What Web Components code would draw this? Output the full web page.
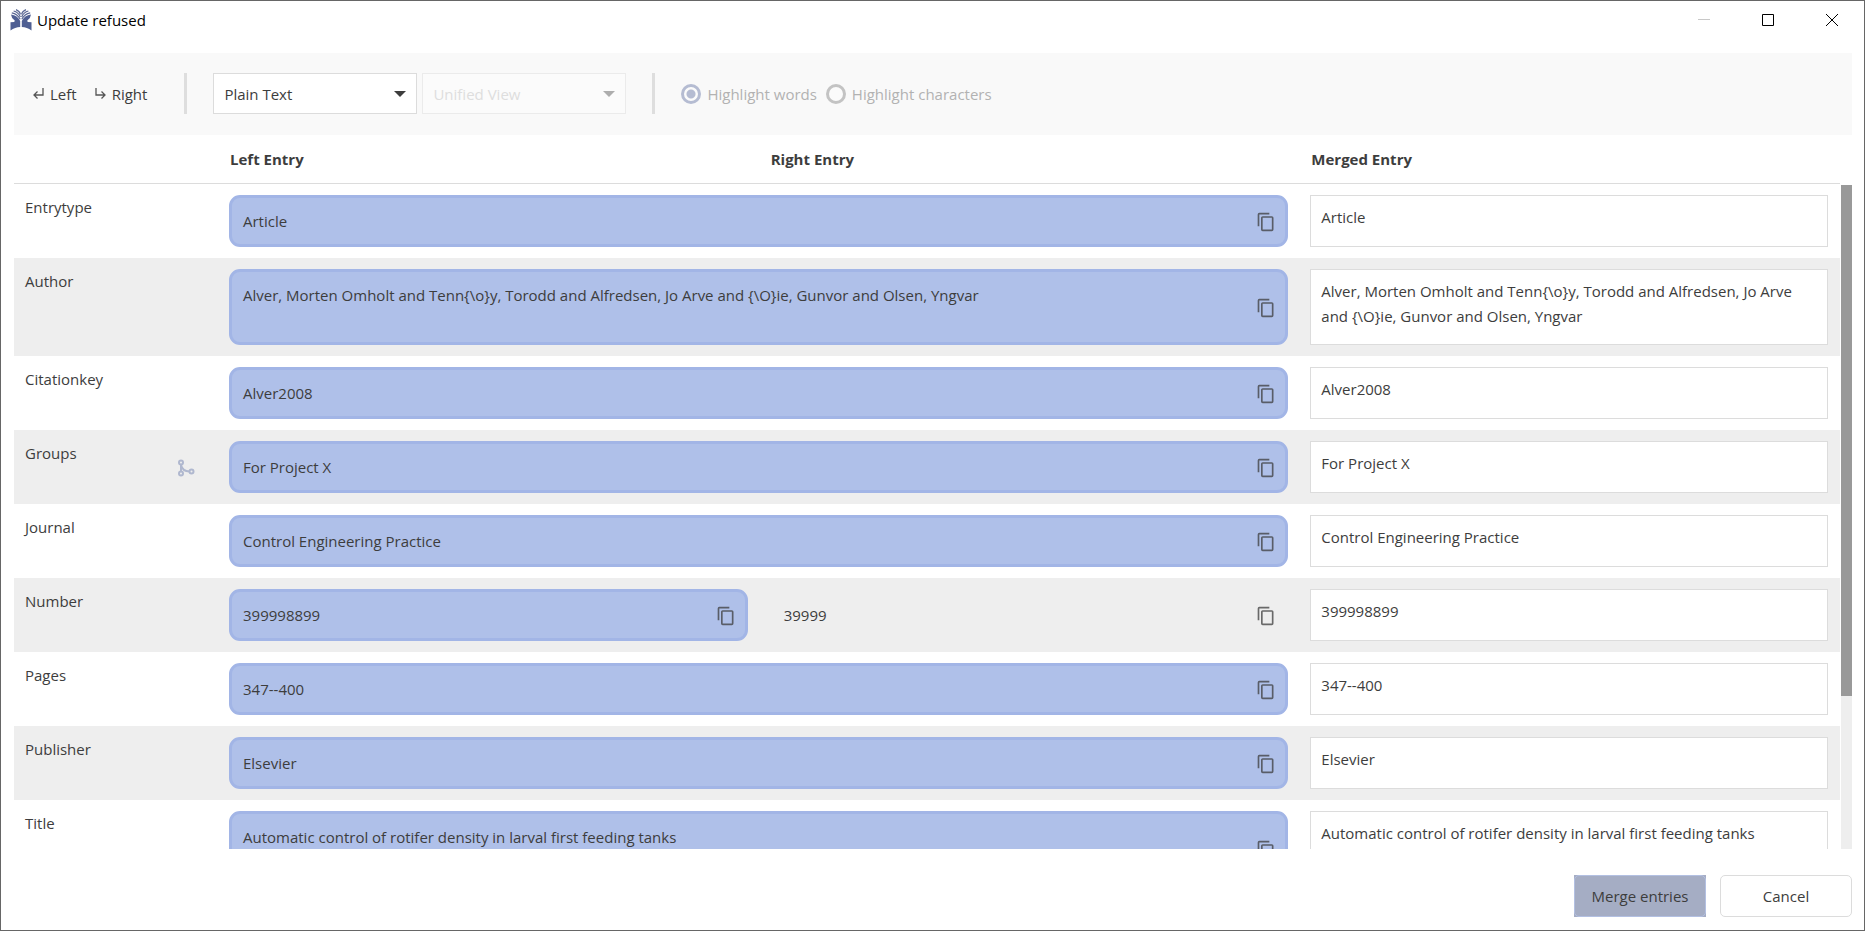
<!DOCTYPE html>
<html lang="en">
<head>
<meta charset="utf-8">
<title>Update refused</title>
<style>
  html, body { height: 100%; margin: 0; }
  body { font: 15px/24px "Open Sans", "Noto Sans", sans-serif; color: #3d3d3d; background: #fff; }
</style>
</head>
<body>
<merge-dialog></merge-dialog>

<script>
const define = (name, html, setup) => {
  const template = document.createElement('template');
  template.innerHTML = html;
  customElements.define(name, class extends HTMLElement {
    connectedCallback() {
      if (this.shadowRoot) return;
      this.attachShadow({ mode: 'open' }).append(template.content.cloneNode(true));
      if (setup) setup(this, this.shadowRoot);
    }
  });
};

define('title-bar', `
  <style>
    :host { display: flex; align-items: center; gap: 5px; height: 38px; padding: 0 20px 0 9px; color: #000; }
    h1 { flex: 1; margin: 0; font-size: 15px; font-weight: 400; line-height: 24px; }
    nav { display: flex; gap: 40px; }
    button { width: 24px; height: 24px; padding: 0; border: 0; background: none; color: inherit; }
    svg { display: block; }
    button:disabled { color: #c8c8c8; }
  </style>
  <svg width="22" height="22" viewBox="0 0 22 22" fill="none" aria-hidden="true">
    <g id="half">
      <path fill="#4f5f93" d="M1 5.600Q7.500 6.500 10.200 12V18Q5 18 0.500 21.600V13.200L4 13Q5.800 12.200 4.200 11Q1.500 9.500 1 5.600Z"/>
      <path stroke="#5a6794" stroke-width="1.200" d="M1.800 3.800Q7.500 4.800 10.200 10.200M3.600 2Q8.300 3.200 10.400 8M6 0.600Q9.500 2 10.500 5.400"/>
    </g>
    <use href="#half" transform="matrix(-1 0 0 1 22 0)"/>
  </svg>
  <h1><slot></slot></h1>
  <nav aria-label="Window">
    <button disabled aria-label="Minimize"><svg width="24" height="24"><path d="M6 11.500H18" stroke="currentColor"/></svg></button>
    <button aria-label="Maximize"><svg width="24" height="24"><path d="M6.500 6.500H17.500V17.500H6.500Z" fill="none" stroke="currentColor"/></svg></button>
    <button aria-label="Close"><svg width="24" height="24"><path d="M6 6L18 18M18 6L6 18" stroke="currentColor"/></svg></button>
  </nav>
`);

define('drop-down', `
  <style>
    :host { display: grid; width: 204px; height: 41px; align-items: center; }
    select, svg { grid-area: 1 / 1; }
    select { width: 100%; height: 100%; padding: 0 10px; border: 1px solid #dcdcdc; border-radius: 0;
      appearance: none; background: #fff; color: inherit; font: inherit; opacity: 1; }
    svg { justify-self: end; margin-right: 11px; pointer-events: none; }
    select:disabled { border-color: #ebebeb; background: #fbfbfb; color: #dedede; }
    select:disabled + svg { color: #adadad; }
  </style>
  <select><option></option></select>
  <svg width="12" height="6" viewBox="0 0 12 6" aria-hidden="true"><path fill="currentColor" d="M0 0H12L6 6Z"/></svg>
`, (host, root) => {
  const select = root.querySelector('select');
  select.options[0].textContent = host.getAttribute('value');
  select.setAttribute('aria-label', host.getAttribute('label'));
  select.disabled = host.hasAttribute('disabled');
});

define('tool-bar', `
  <style>
    :host { display: flex; align-items: center; padding: 20px 19px 21px; background: #f9f9f9; }
    button { display: flex; align-items: center; gap: 6px; padding: 0; border: 0; background: none; color: inherit; font: inherit; }
    button + button { margin-left: 18px; }
    hr { align-self: stretch; width: 3px; margin: 0 26px; border: 0; background: #dedede; }
    hr.first { margin-left: 37px; }
    drop-down + drop-down { margin-left: 5px; }
    fieldset { display: flex; gap: 9px; margin: 0; padding: 0; border: 0; }
    label { display: flex; align-items: center; gap: 6px; color: #b2b2b2; }
    input { appearance: none; width: 20px; height: 20px; margin: 0; border: 3px solid #c3c3c3; border-radius: 50%; background: #fbfbfb; }
    input:checked { border-color: #b5bcd2; background: radial-gradient(circle, #b5bcd2 4px, #fbfbfb 5px); }
  </style>
  <button><svg width="11" height="11" viewBox="0 0 11 11" fill="none" stroke="#555" stroke-width="1.300" aria-hidden="true"><path d="M10 0V7H1M4.500 3.500L1 7L4.500 10.500"/></svg>Left</button>
  <button><svg width="11" height="11" viewBox="0 0 11 11" fill="none" stroke="#555" stroke-width="1.300" aria-hidden="true"><path d="M1 0V7H10M6.500 3.500L10 7L6.500 10.500"/></svg>Right</button>
  <hr class="first">
  <drop-down label="Diff format" value="Plain Text"></drop-down>
  <drop-down label="Diff view" value="Unified View" disabled></drop-down>
  <hr>
  <fieldset disabled>
    <label><input type="radio" name="mode" checked>Highlight words</label>
    <label><input type="radio" name="mode">Highlight characters</label>
  </fieldset>
`);

define('entry-cell', `
  <style>
    :host { display: flex; box-sizing: border-box; height: 100%; padding: 11px 9px 11px 11px; border: 3px solid transparent; border-radius: 11px; }
    :host([selected]) { border-color: #a2b5e6; background: #afc0e9; }
    span { flex: 1; min-width: 0; }
    button { align-self: center; padding: 0; border: 0; background: none; color: #3d3d3d; opacity: .75; }
    svg { display: block; margin-top: 2px; }
  </style>
  <span><slot></slot></span>
  <button aria-label="Copy"><svg width="20" height="20" viewBox="0 0 24 24" aria-hidden="true"><path fill="currentColor" d="M19 21H8V7H19M19 5H8A2 2 0 0 0 6 7V21A2 2 0 0 0 8 23H19A2 2 0 0 0 21 21V7A2 2 0 0 0 19 5M16 1H4A2 2 0 0 0 2 3V17H4V3H16V1Z"/></svg></button>
`);

define('merged-field', `
  <style>
    :host { display: block; height: 100%; }
    textarea { display: block; box-sizing: border-box; width: 100%; height: 100%; margin: 0; padding: 9px 10px; border: 1px solid #dcdcdc;
      border-radius: 0; background: #fff; color: inherit; font: inherit; line-height: 25px; resize: none; overflow: hidden; }
  </style>
  <textarea></textarea>
`, (host, root) => {
  const area = root.querySelector('textarea');
  area.value = host.getAttribute('value');
  area.rows = host.getAttribute('rows');
  area.setAttribute('aria-label', host.getAttribute('label'));
});

define('entry-table', `
  <style>
    :host { display: flex; gap: 1px; min-height: 0; }
    .view { flex: 1; min-width: 0; overflow: hidden; }
    table { width: 100%; table-layout: fixed; border-collapse: separate; border-spacing: 0; }
    col.name { width: 204px; }
    th, td { padding: 11px; text-align: left; vertical-align: top; font-weight: 400; }
    thead th { height: 24px; padding: 12px; border-bottom: 1px solid #dcdcdc; font-weight: 700; }
    tbody tr:nth-child(even) { background: #eee; }
    td { height: 52px; }
    td:last-child { padding-right: 12px; }
    tr.tall td { height: 76px; }
    .label { display: flex; justify-content: space-between; }
    .label button { align-self: start; margin: 18px 12px 0 0; padding: 0; border: 0; background: none; }
    .label svg { display: block; }
    .bar { display: flex; width: 11px; margin-top: 50px; background: #eee; }
    .bar div { width: 100%; height: 77%; background: #999; }
  </style>
  <div class="view">
    <table>
      <colgroup><col class="name"><col><col><col></colgroup>
      <thead><tr><th></th><th>Left Entry</th><th>Right Entry</th><th>Merged Entry</th></tr></thead>
      <tbody></tbody>
    </table>
  </div>
  <div class="bar"><div></div></div>
`, (host, root) => {
  const authors = 'Alver, Morten Omholt and Tenn{\\o}y, Torodd and Alfredsen, Jo Arve and {\\O}ie, Gunvor and Olsen, Yngvar';
  const rows = [
    { name: 'Entrytype', left: 'Article' },
    { name: 'Author', left: authors, lines: 2 },
    { name: 'Citationkey', left: 'Alver2008' },
    { name: 'Groups', left: 'For Project X', mergeable: true },
    { name: 'Journal', left: 'Control Engineering Practice' },
    { name: 'Number', left: '399998899', right: '39999' },
    { name: 'Pages', left: '347--400' },
    { name: 'Publisher', left: 'Elsevier' },
    { name: 'Title', left: 'Automatic control of rotifer density in larval first feeding tanks', lines: 2 }
  ];
  const merge = `<button aria-label="Merge groups"><svg width="18" height="18" viewBox="0 0 18 18" fill="none" stroke="#b0b8cf" stroke-width="2" aria-hidden="true"><circle cx="4" cy="3.500" r="2"/><circle cx="4" cy="14.500" r="2"/><circle cx="14.500" cy="12.500" r="2"/><path d="M4 5.500V12.500M4 6Q5.500 12.500 12.500 12.500"/></svg></button>`;
  root.querySelector('tbody').innerHTML = rows.map(row => `
    <tr${row.lines ? ' class="tall"' : ''}>
      <th scope="row"><div class="label">${row.name}${row.mergeable ? merge : ''}</div></th>
      <td${row.right ? '' : ' colspan="2"'}><entry-cell selected>${row.left}</entry-cell></td>
      ${row.right ? `<td><entry-cell>${row.right}</entry-cell></td>` : ''}
      <td><merged-field label="${row.name}" rows="${row.lines || 1}" value="${row.left}"></merged-field></td>
    </tr>`).join('');
});

define('dialog-button', `
  <style>
    :host { display: block; }
    button { box-sizing: border-box; width: 132px; height: 42px; padding: 0; border: 1px solid #dcdcdc; border-radius: 5px;
      background: #fff; color: inherit; font: inherit; }
    :host([primary]) { background: #a5adc4; }
    :host([primary]) button { border: 1px solid #b3c0e2; background: #a5adc4; }
  </style>
  <button><slot></slot></button>
`);

define('merge-dialog', `
  <style>
    :host { display: flex; flex-direction: column; box-sizing: border-box; height: 100vh; border: 1px solid #666; background: #fff; }
    main { display: flex; flex: 1; flex-direction: column; min-height: 0; padding: 14px 12px 0 13px; }
    entry-table { flex: 1; }
    footer { display: flex; justify-content: flex-end; gap: 14px; padding: 26px 12px 13px; }
  </style>
  <title-bar>Update refused</title-bar>
  <main>
    <tool-bar></tool-bar>
    <entry-table></entry-table>
  </main>
  <footer>
    <dialog-button primary>Merge entries</dialog-button>
    <dialog-button>Cancel</dialog-button>
  </footer>
`);
</script>
</body>
</html>
